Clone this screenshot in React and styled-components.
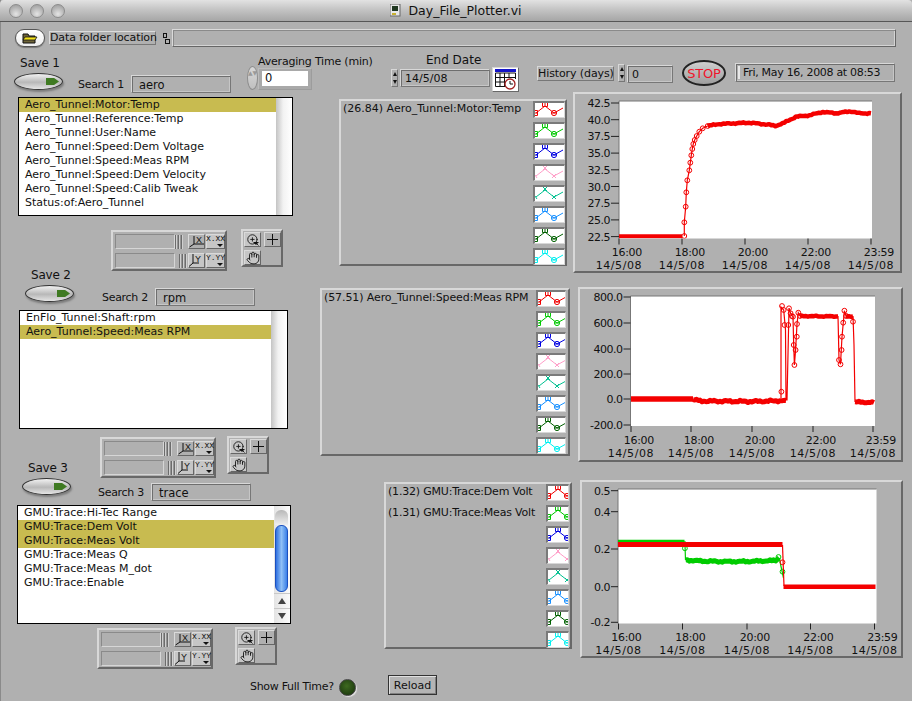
import React from 'react';
import styled, { createGlobalStyle, css } from 'styled-components';
import { Hand, ZoomIn } from 'lucide-react';

const GlobalStyle = createGlobalStyle`
  html, body {
    margin: 0;
    background: #b0b0b0;
    overflow: hidden;
  }
  * { box-sizing: border-box; }
`;

const raised = css`
  border: 2px solid;
  border-color: #d8d8d8 #686868 #686868 #d8d8d8;
`;

const Window = styled.div`
  width: 912px;
  height: 701px;
  background: #b0b0b0;
  color: #111;
  font-family: "DejaVu Sans", sans-serif;
  font-size: 11px;
  overflow: hidden;
  box-shadow: inset 1px 0 0 #8a8a8a;
`;

// title bar
const TitleBar = styled.div`
  height: 22px;
  display: flex;
  align-items: center;
  justify-content: center;
  position: relative;
  background: linear-gradient(#e2e2e2, #c4c4c4 45%, #a6a6a6);
  border-bottom: 1px solid #565656;
  border-radius: 4px 4px 0 0;
`;

const Lights = styled.div`
  position: absolute;
  left: 9px;
  top: 4px;
  display: flex;
  gap: 7px;
`;

const Light = styled.span`
  width: 14px;
  height: 14px;
  border-radius: 50%;
  border: 1px solid #8c8c8c;
  background: radial-gradient(circle at 50% 75%, #e4e4e4, #b4b4b4 60%, #989898);
`;

const TitleText = styled.span`
  margin-left: 7px;
  font-size: 12.5px;
`;

// path row
const PathRow = styled.div`
  display: flex;
  align-items: center;
  height: 18px;
  margin: 7px 0 6px 15px;
`;

const FolderButton = styled.button`
  width: 30px;
  height: 18px;
  padding: 0;
  display: flex;
  align-items: center;
  justify-content: center;
  border: 1px solid #555;
  border-radius: 9px;
  background: linear-gradient(#fff, #eee);
  box-shadow: 0 1px 1px #777;
`;

const PlainLabel = styled.span`
  width: 107px;
  height: 14px;
  margin-left: 4px;
  line-height: 12px;
  letter-spacing: -0.1px;
  text-align: center;
  white-space: nowrap;
  border: 1px solid;
  border-color: #dcdcdc #777 #777 #dcdcdc;
`;

const PathIcon = styled.span`
  width: 9px;
  height: 16px;
  margin-left: 7px;
  display: flex;
  align-items: center;
`;

const PathField = styled.div`
  width: 724px;
  height: 18px;
  border: 1px solid;
  border-color: #dadada #666 #666 #dadada;
  box-shadow: inset 1px 1px 0 #8a8a8a, inset -1px -1px 0 #d4d4d4;
`;

// control row
const HeaderRow = styled.div`
  display: flex;
  align-items: flex-start;
  height: 39px;
  padding-left: 14px;
`;

const SaveGroup = styled.div`
  display: flex;
  align-items: flex-start;
  margin-left: ${(p) => p.$left || 0}px;
  margin-top: ${(p) => p.$offset || 0}px;
  height: ${(p) => p.$height}px;
`;

const SaveBlock = styled.div`
  width: 49px;
  flex: none;
`;

const SaveLabel = styled.div`
  height: 14px;
  line-height: 14px;
  margin-left: 6px;
  font-size: 12px;
  letter-spacing: -0.2px;
  white-space: nowrap;
`;

const Toggle = styled.div`
  position: relative;
  width: 49px;
  height: 17px;
  margin-top: 3px;
  border-radius: 50%;
  border: 1px solid #333;
  background: linear-gradient(#f2f2f2, #b8b8b8 55%, #e4e4e4);
  box-shadow: 1px 2px 2px #7c7c7c;
`;

const ToggleArrow = styled.span`
  position: absolute;
  left: 31px;
  top: 3px;
  width: 13px;
  height: 9px;
  background: #3f7a22;
  clip-path: polygon(0 12%, 62% 12%, 100% 50%, 62% 88%, 0 88%);
`;

const SearchBlock = styled.div`
  display: flex;
  align-items: center;
  margin-left: ${(p) => p.$gap}px;
  margin-top: ${(p) => p.$top}px;
`;

const SearchLabel = styled.span`
  width: 53px;
  letter-spacing: -0.3px;
  white-space: nowrap;
`;

const textField = css`
  border: 1px solid;
  border-color: #d8d8d8 #777 #777 #d8d8d8;
  box-shadow: inset 1px 1px 0 #6e6e6e, inset -1px -1px 0 #c6c6c6;
  white-space: nowrap;
`;

const SearchField = styled.div`
  ${textField}
  width: 100px;
  height: 18px;
  line-height: 19px;
  padding-left: 7px;
  font-size: 11.5px;
`;

const AveragingBlock = styled.div`
  width: 126px;
  margin-left: 16px;
  margin-top: 3px;
  height: 36px;
  flex: none;
`;

const AveragingLabel = styled.div`
  margin-top: -1px;
  margin-left: 11px;
  height: 14px;
  line-height: 14px;
  letter-spacing: -0.2px;
  white-space: nowrap;
`;

const AveragingControl = styled.div`
  display: flex;
  align-items: flex-start;
`;

const LensSpinner = styled.div`
  width: 11px;
  height: 24px;
  margin-top: -3px;
  border-radius: 50%;
  border: 1px solid #8e8e8e;
  background: linear-gradient(#d8d8d8, #c0c0c0);
  color: #999;
  font-size: 6px;
  line-height: 10px;
  text-align: center;
  padding-top: 1px;
`;

const NumericFrame = styled.div`
  width: 54px;
  height: 22px;
  margin-top: -1px;
  padding: 2px 3px;
  background: #a9a9a9;
  border: 1px solid;
  border-color: #bcbcbc #9c9c9c #9c9c9c #bcbcbc;
`;

const NumericWhite = styled.div`
  height: 15px;
  width: 46px;
  background: #fff;
  line-height: 15px;
  padding-left: 3px;
  font-size: 11.5px;
`;

const EndDateBlock = styled.div`
  width: 128px;
  margin-left: 18px;
  flex: none;
`;

const EndDateLabel = styled.div`
  height: 15px;
  line-height: 15px;
  margin-left: 35px;
  font-size: 12px;
  white-space: nowrap;
`;

const DateControl = styled.div`
  display: flex;
  align-items: flex-start;
  margin-top: 1px;
`;

const ArrowStack = styled.div`
  width: 7px;
  height: 18px;
  display: flex;
  flex-direction: column;
  border: 1px solid;
  border-color: #d8d8d8 #777 #777 #d8d8d8;
  flex: none;
`;

const Arrow = styled.span`
  flex: 1;
  display: flex;
  align-items: center;
  justify-content: center;
  &::after {
    content: '';
    border-left: 2.5px solid transparent;
    border-right: 2.5px solid transparent;
    ${(p) => (p.$down ? 'border-top: 4px solid #111;' : 'border-bottom: 4px solid #111;')}
  }
`;

const DateField = styled.div`
  ${textField}
  width: 90px;
  height: 18px;
  margin-left: 2px;
  line-height: 17px;
  padding-left: 4px;
`;

const CalendarButton = styled.div`
  width: 27px;
  height: 25px;
  margin-left: 2px;
  margin-top: -2px;
  background: #fff;
  ${raised}
  border-width: 1px;
  padding: 1px 2px;
`;

const HistoryBlock = styled.div`
  display: flex;
  align-items: flex-start;
  margin-left: 18px;
  margin-top: 11px;
  flex: none;
`;

const HistoryLabel = styled.span`
  width: 77px;
  height: 15px;
  margin-top: 2px;
  margin-right: 4px;
  line-height: 13px;
  letter-spacing: -0.1px;
  text-align: center;
  white-space: nowrap;
  border: 1px solid;
  border-color: #d8d8d8 #777 #777 #d8d8d8;
`;

const HistoryField = styled.div`
  ${textField}
  width: 46px;
  height: 18px;
  margin-left: 2px;
  margin-top: 1px;
  line-height: 17px;
  padding-left: 4px;
`;

const StopButton = styled.button`
  width: 44px;
  height: 26px;
  margin-left: 9px;
  margin-top: 7px;
  padding: 0;
  flex: none;
  border-radius: 50%;
  border: 2px solid #222;
  background: linear-gradient(#cfcfcf, #9e9e9e);
  color: #f0142a;
  font-family: "DejaVu Sans", sans-serif;
  font-size: 13px;
  letter-spacing: -0.2px;
`;

const ClockField = styled.div`
  ${textField}
  width: 160px;
  height: 19px;
  margin-left: 9px;
  margin-top: 10px;
  padding-left: 7px;
  line-height: 18px;
  letter-spacing: -0.3px;
  flex: none;
  position: relative;
  &::before {
    content: '';
    position: absolute;
    left: 2px;
    top: 2px;
    width: 2px;
    height: 13px;
    background: #e8e8e8;
  }
`;

// columns
const Columns = styled.div`
  display: flex;
  align-items: flex-start;
`;

const LeftColumn = styled.div`
  width: 310px;
  flex: none;
  padding-top: 5px;
`;

const ListBox = styled.div`
  display: flex;
  width: ${(p) => p.$width}px;
  height: 119px;
  margin-left: ${(p) => p.$left}px;
  background: #fff;
  border: 1px solid #000;
`;

const ListRows = styled.div`
  flex: 1;
  min-width: 0;
`;

const ListRow = styled.div`
  height: 14px;
  line-height: 14px;
  padding-left: 6px;
  white-space: nowrap;
  background: ${(p) => (p.$selected ? '#c8bb50' : 'transparent')};
`;

const ScrollGutter = styled.div`
  width: 16px;
  flex: none;
  background: linear-gradient(to right, #c4c4c4, #f2f2f2 45%, #fff);
`;

const AquaScroll = styled.div`
  width: 16px;
  flex: none;
  display: flex;
  flex-direction: column;
  background: linear-gradient(to right, #e4e4e4, #fbfbfb);
`;

const ScrollCap = styled.div`
  height: 15px;
  margin: 4px 2px 0 1px;
  border-radius: 6px 6px 0 0;
  background: linear-gradient(#b8b8b8, #efefef);
`;

const ScrollThumb = styled.div`
  height: 68px;
  margin: 0 2px 0 1px;
  border-radius: 6px;
  border: 1px solid #1a50c0;
  background: linear-gradient(to right, #2f70e0, #8fc0f6 50%, #3a80e8);
`;

const ScrollButton = styled.div`
  height: 15px;
  margin-top: ${(p) => p.$top || 0}px;
  display: flex;
  align-items: center;
  justify-content: center;
  border-top: 1px solid #c8c8c8;
  &::after {
    content: '';
    border-left: 4px solid transparent;
    border-right: 4px solid transparent;
    ${(p) => (p.$down ? 'border-top: 6px solid #444;' : 'border-bottom: 6px solid #444;')}
  }
`;

const PaletteRow = styled.div`
  display: flex;
  align-items: flex-start;
  gap: ${(p) => p.$gap}px;
  margin: ${(p) => p.$top}px 0 ${(p) => p.$bottom}px ${(p) => p.$left}px;
`;

const ScalePalette = styled.div`
  ${raised}
  width: 116px;
  height: 41px;
  margin-top: 1px;
  padding: 2px;
  display: flex;
  flex-direction: column;
  gap: 4px;
`;

const ScaleLine = styled.div`
  display: flex;
  align-items: center;
  height: 15px;
`;

const ScaleName = styled.div`
  width: 60px;
  height: 15px;
  flex: none;
  border: 1px solid;
  border-color: #8a8a8a #d6d6d6 #d6d6d6 #8a8a8a;
`;

const Grip = styled.div`
  width: 8px;
  height: 14px;
  margin-left: ${(p) => p.$offset}px;
  flex: none;
  background: repeating-linear-gradient(to right, #6c6c6c 0 1px, #d0d0d0 1px 2px, #969696 2px 3px);
`;

const PaletteButton = styled.div`
  width: ${(p) => p.$width || 17}px;
  height: 15px;
  margin-left: ${(p) => p.$gap || 0}px;
  flex: none;
  display: flex;
  align-items: center;
  justify-content: center;
  position: relative;
  border: 1px solid;
  border-color: #dadada #666 #666 #dadada;
  background: ${(p) => (p.$active ? '#c6c6c6' : 'transparent')};
`;

const FormatText = styled.span`
  font-family: "Liberation Mono", monospace;
  font-size: 8px;
  margin-top: -5px;
  line-height: 8px;
`;

const FormatCaret = styled.span`
  position: absolute;
  right: 1px;
  bottom: 1px;
  border-left: 3px solid transparent;
  border-right: 3px solid transparent;
  border-top: 3px solid #111;
`;

const ZoomPalette = styled.div`
  ${raised}
  width: 42px;
  height: 38px;
  padding: 1px;
  display: grid;
  grid-template-columns: 17px 17px;
  grid-template-rows: 15px 15px;
  column-gap: 3px;
  row-gap: 3px;
`;

const ZoomTool = styled(PaletteButton)`
  margin-left: 0;
  color: #111;
`;

const SaveRow = styled.div`
  margin-top: ${(p) => p.$top}px;
`;

const RightColumn = styled.div`
  flex: 1;
  min-width: 0;
`;

const ChartRow = styled.div`
  display: flex;
  align-items: flex-start;
  gap: ${(p) => p.$gap}px;
  margin: ${(p) => p.$top}px 0 0 ${(p) => p.$left}px;
`;

const Legend = styled.div`
  ${raised}
  width: ${(p) => p.$width}px;
  height: ${(p) => p.$height}px;
  margin-top: ${(p) => p.$top}px;
  padding: 0 ${(p) => p.$right}px 0 2px;
  display: flex;
  flex-direction: column;
`;

const LegendRow = styled.div`
  height: 21px;
  display: flex;
  align-items: flex-start;
  justify-content: space-between;
  flex: none;
`;

const LegendName = styled.span`
  line-height: 16px;
  letter-spacing: ${(p) => p.$spacing}px;
  white-space: nowrap;
`;

const Swatch = styled.div`
  width: ${(p) => p.$width}px;
  height: 17px;
  overflow: hidden;
  flex: none;
  background: #fff;
  border: 1px solid;
  border-width: 2px 1px 1px 2px;
  border-color: #7a7a7a #d8d8d8 #d8d8d8 #7a7a7a;
`;

const ChartFrame = styled.div`
  ${raised}
  width: ${(p) => p.$width}px;
  height: ${(p) => p.$height}px;
  flex: none;
`;

const ChartSvg = styled.svg`
  display: block;
  font-family: "DejaVu Sans", sans-serif;
  font-size: 11px;
`;

// footer
const Footer = styled.div`
  display: flex;
  align-items: center;
  height: 20px;
  margin-top: 6px;
  padding-left: 250px;
`;

const FullTimeLabel = styled.span`
  width: 89px;
  margin-top: 3px;
  letter-spacing: -0.3px;
  white-space: nowrap;
`;

const Led = styled.span`
  width: 17px;
  height: 17px;
  margin-top: 4px;
  border-radius: 50%;
  border: 1px solid #444;
  background: radial-gradient(circle at 45% 40%, #3e6a20, #1f3d10 75%);
  box-shadow: 1px 1px 1px #e8e8e8;
`;

const ReloadButton = styled.button`
  width: 49px;
  height: 20px;
  margin-left: 32px;
  padding: 0;
  font-family: "DejaVu Sans", sans-serif;
  font-size: 11px;
  color: #111;
  background: #b4b4b4;
  border: 1px solid #333;
  box-shadow: inset 1px 1px 0 #e0e0e0, inset -1px -1px 0 #808080;
`;

const swatchColors = [
  { color: '#f00000' },
  { color: '#00c800' },
  { color: '#0000e0' },
  { color: '#ff9ec8', cross: true },
  { color: '#00c090', cross: true },
  { color: '#1890ff' },
  { color: '#006000' },
  { color: '#00f0f0' },
];

function SwatchLine({ color, cross }) {
  return (
    <svg width="30" height="15" viewBox="0 0 30 15" fill="none" stroke={color} strokeWidth="1">
      <path d="M1 10 L10 3 L19 10 L28 5" />
      {cross ? (
        <path d="M8 0 L12 4 M12 0 L8 4 M17 8 L21 12 M21 8 L17 12 M0 9 L2 12" />
      ) : (
        <g>
          <path d="M7.5 0 V3.5 H12.5 V0 M10 0 V3" />
          <circle cx="19" cy="10" r="2.6" />
          <path d="M17 10 H21" />
          <path d="M0 7.5 H2.5 V12.5 H0 M0 10 H2.5" />
        </g>
      )}
    </svg>
  );
}

function ChartLegend({ names, width, height, top, right, spacing, swatchWidth }) {
  return (
    <Legend $width={width} $height={height} $top={top} $right={right}>
      {swatchColors.map((s, i) => (
        <LegendRow key={s.color}>
          <LegendName $spacing={spacing}>{names[i]}</LegendName>
          <Swatch $width={swatchWidth}>
            <SwatchLine color={s.color} cross={s.cross} />
          </Swatch>
        </LegendRow>
      ))}
    </Legend>
  );
}

function pts(list) {
  return list.map((p) => p.join(',')).join(' ');
}

// the real traces are noisy, so add a small fixed wobble along a band
function rough(list, amp) {
  const out = [];
  for (let i = 0; i < list.length - 1; i++) {
    const [x0, y0] = list[i];
    const [x1, y1] = list[i + 1];
    const steps = Math.max(1, Math.round((x1 - x0) / 2));
    for (let s = 0; s < steps; s++) {
      const x = x0 + ((x1 - x0) * s) / steps;
      const y = y0 + ((y1 - y0) * s) / steps;
      out.push([x, y + (Math.sin(x * 1.9) + Math.sin(x * 0.43)) * amp]);
    }
  }
  out.push(list[list.length - 1]);
  return out;
}

// coordinates below are window pixels, the viewBox takes care of the offset
function Chart({ box, plot, yTicks, xTicks, timeY, dateY, tickLen, series }) {
  const times = ['16:00', '18:00', '20:00', '22:00', '23:59'];
  const clipId = 'clip' + box.top;
  return (
    <ChartFrame $width={box.w} $height={box.h}>
      <ChartSvg
        width={box.w - 4}
        height={box.h - 4}
        viewBox={`${box.left + 2} ${box.top + 2} ${box.w - 4} ${box.h - 4}`}
      >
        <defs>
          <clipPath id={clipId}>
            <rect x={plot.x0} y={plot.y0} width={plot.x1 - plot.x0} height={plot.y1 - plot.y0} />
          </clipPath>
        </defs>
        <rect x={plot.x0} y={plot.y0} width={plot.x1 - plot.x0} height={plot.y1 - plot.y0} fill="#fff" />
        <path d={`M${plot.x0} ${plot.y1} V${plot.y0} H${plot.x1}`} fill="none" stroke="#777" />
        {yTicks.map((t) => (
          <g key={t.label}>
            <path d={`M${plot.x0 - tickLen} ${t.y} H${plot.x0}`} stroke="#222" />
            <text x={plot.x0 - tickLen - 1} y={t.y + 4} textAnchor="end" fill="#111" letterSpacing="-0.5">
              {t.label}
            </text>
          </g>
        ))}
        {xTicks.map((x, i) => (
          <g key={times[i]}>
            <path d={`M${x} ${plot.y1} v6`} stroke="#222" />
            <text x={x + 23} y={timeY} textAnchor="end" fill="#111" letterSpacing="-0.3">
              {times[i]}
            </text>
            <text x={x + 23} y={dateY} textAnchor="end" fill="#111" letterSpacing="0.55">
              14/5/08
            </text>
          </g>
        ))}
        <g clipPath={`url(#${clipId})`} fill="none">
          {series.map((s, i) => (
            <g key={i} stroke={s.color}>
              {(s.lines || []).map((l, j) => (
                <polyline key={j} points={pts(l)} strokeWidth="1.2" />
              ))}
              {(s.bands || []).map((b, j) => (
                <polyline key={j} points={pts(b.p)} strokeWidth={b.w} strokeLinejoin="round" />
              ))}
              {(s.marks || []).map((m, j) => (
                <circle key={j} cx={m[0]} cy={m[1]} r="2.4" strokeWidth="1" />
              ))}
            </g>
          ))}
        </g>
      </ChartSvg>
    </ChartFrame>
  );
}

const RED = '#f40000';
const GREEN = '#00cc00';

const rise = [
  [684.3, 236], [684.3, 222.3], [685.7, 206.7], [686.3, 192.3], [687.3, 180.3], [689.3, 170.3],
  [690.3, 162.7], [691.3, 155.3], [692.3, 149], [693.3, 144], [694.7, 140], [696.7, 136],
  [699.3, 131.7], [702.7, 128.3], [707.7, 126],
];

const chart1 = {
  box: { left: 573, top: 92, w: 329, h: 181 },
  plot: { x0: 619, x1: 872, y0: 101, y1: 238.5 },
  tickLen: 8,
  timeY: 256,
  dateY: 269,
  xTicks: [619, 682, 745, 808, 871],
  yTicks: [
    ['42.5', 103], ['40.0', 119.7], ['37.5', 136.4], ['35.0', 153.1], ['32.5', 169.8],
    ['30.0', 186.5], ['27.5', 203.2], ['25.0', 219.9], ['22.5', 236.6],
  ].map(([label, y]) => ({ label, y })),
  series: [
    {
      color: RED,
      lines: [rise],
      marks: rise,
      bands: [
        { w: 4, p: [[619, 236.3], [682, 236.3]] },
        {
          w: 4.5,
          p: rough([
            [707.7, 126], [719.3, 124], [749.3, 122.7], [769.3, 124.7], [775.3, 126], [784.3, 122.7],
            [796, 116.7], [809.3, 115.3], [822.7, 112], [836, 113.3], [851, 111.3], [859.3, 113.3], [871, 113.3],
          ], 0.35),
        },
      ],
    },
  ],
};

const spikeA = [
  [781.4, 391.7], [782, 306], [783.7, 310], [784.5, 325], [789, 308.3], [790.6, 313.3], [788.3, 325],
  [791.7, 316], [793, 316.7], [793.7, 345], [794.4, 365], [795.6, 350], [796.8, 336.7], [797, 324],
  [798.3, 312.7], [800, 316],
];
const spikeB = [
  [839, 360], [840.5, 364.3], [841.6, 350], [842, 336.7], [843.2, 322.7], [844.4, 310.7], [846, 316],
  [853, 321.7],
];

const chart2 = {
  box: { left: 578, top: 287, w: 325, h: 175 },
  plot: { x0: 630.5, x1: 875, y0: 296, y1: 426 },
  tickLen: 7,
  timeY: 444,
  dateY: 457,
  xTicks: [631, 691, 752, 813, 873],
  yTicks: [
    ['800.0', 297], ['600.0', 323], ['400.0', 349], ['200.0', 374], ['0.0', 399], ['-200.0', 425],
  ].map(([label, y]) => ({ label, y })),
  series: [
    {
      color: RED,
      lines: [
        [[781, 398], [781, 307], [783.7, 310], [785.5, 330], [786, 400], [787, 400], [789, 308.3]],
        [[789, 308.3], [790.6, 313.3], [793, 317], [793.7, 345], [794.4, 365], [795.6, 350], [797, 324], [798.3, 312.7], [800, 316]],
        [[838, 316], [839, 360], [840.5, 364.3], [842, 336.7], [844.4, 310.7], [846, 316]],
        [[853, 316], [854, 345], [855, 402]],
      ],
      marks: [...spikeA, ...spikeB],
      bands: [
        { w: 5.5, p: [[631, 399], [693, 399]] },
        { w: 5, p: rough([[693, 399.5], [700, 401], [752, 401.5], [770, 401], [786, 400.5]], 0.6) },
        { w: 4.5, p: rough([[800, 316], [838, 316.5]], 0.3) },
        { w: 4.5, p: rough([[846, 316], [853, 316.5]], 0.3) },
        { w: 5, p: rough([[855, 402], [874, 402.5]], 0.4) },
      ],
    },
  ],
};

const chart3 = {
  box: { left: 579.5, top: 480, w: 323, h: 178 },
  plot: { x0: 617.5, x1: 876, y0: 489, y1: 623.5 },
  tickLen: 7,
  timeY: 641,
  dateY: 654,
  xTicks: [618, 682, 746.5, 810, 874],
  yTicks: [
    ['0.5', 490.7], ['0.4', 511.7], ['0.2', 549], ['0.0', 586.7], ['-0.2', 622.3],
  ].map(([label, y]) => ({ label, y })),
  series: [
    {
      color: GREEN,
      lines: [[[684.4, 541], [685, 560]], [[778.7, 558], [783, 578]]],
      marks: [[684.4, 548.3], [782, 571.7], [778, 557]],
      bands: [
        { w: 3, p: [[617.5, 541.3], [684, 541.3]] },
        {
          w: 5,
          p: rough([[685, 560], [700, 561], [720, 561.5], [745, 561.5], [760, 561], [775, 560.5], [778.7, 558]], 0.5),
        },
      ],
    },
    {
      color: RED,
      lines: [[[782, 545], [783.5, 586]]],
      marks: [[782, 562.3]],
      bands: [
        { w: 5, p: [[617.5, 544.6], [782, 544.6]] },
        { w: 4.5, p: [[783, 586.7], [875, 586.7]] },
      ],
    },
  ],
};

function FolderIcon() {
  return (
    <svg width="16" height="11" viewBox="0 0 16 11">
      <path d="M1 1 H6 L7 3 H13 V10 H1 Z" fill="#6e6438" stroke="#111" />
      <path d="M1 7 L3 4 H15 L13 7 Z" fill="#f4e21a" stroke="#111" strokeWidth="0.8" />
    </svg>
  );
}

function CalendarIcon() {
  return (
    <svg width="21" height="21" viewBox="0 0 21 21" fill="none">
      <rect x="0" y="0" width="21" height="3" fill="#1414c8" />
      <path d="M0.5 4 V17.5 H15 M0.5 4 H20.5 V10 M5 4 V17 M9.5 4 V17 M14 4 V9 M0 8.5 H20 M0 13 H11" stroke="#111" />
      <circle cx="15" cy="15" r="5" fill="#fff" stroke="#a02020" strokeWidth="1.3" />
      <path d="M15 12 V15 H18" stroke="#111" />
    </svg>
  );
}

function AxisIcon({ letter }) {
  const isX = letter === 'X';
  return (
    <svg width="15" height="13" viewBox="0 0 15 13" fill="none">
      <path d={isX ? 'M0.5 12 L5 9 V1 M5 9 H15' : 'M0 12.5 L4 9 V0 M4 9 H10'} stroke="#111" />
      <text x={isX ? 7 : 6} y="7.5" fontFamily="Liberation Sans, sans-serif" fontSize="9" fill="#111">
        {letter}
      </text>
    </svg>
  );
}

function GraphPalette({ top, bottom, left, gap }) {
  return (
    <PaletteRow $top={top} $bottom={bottom} $left={left} $gap={gap}>
      <ScalePalette>
        <ScaleLine>
          <ScaleName />
          <Grip $offset={0} />
          <PaletteButton $gap={5}>
            <AxisIcon letter="X" />
          </PaletteButton>
          <PaletteButton $width={19} $gap={1} $active>
            <FormatText>X.XX</FormatText>
            <FormatCaret />
          </PaletteButton>
        </ScaleLine>
        <ScaleLine>
          <ScaleName />
          <Grip $offset={4} />
          <PaletteButton $gap={1} $active>
            <AxisIcon letter="Y" />
          </PaletteButton>
          <PaletteButton $width={19} $gap={1} $active>
            <FormatText>Y.YY</FormatText>
            <FormatCaret />
          </PaletteButton>
        </ScaleLine>
      </ScalePalette>
      <ZoomPalette>
        <ZoomTool $active>
          <ZoomIn size={14} strokeWidth={1.5} />
          <FormatCaret />
        </ZoomTool>
        <ZoomTool>
          <svg width="13" height="13" viewBox="0 0 13 13" stroke="#111" shapeRendering="crispEdges">
            <path d="M6.5 1 V12 M1 6.5 H12" />
          </svg>
        </ZoomTool>
        <ZoomTool $active>
          <Hand size={14} strokeWidth={1.5} />
        </ZoomTool>
      </ZoomPalette>
    </PaletteRow>
  );
}

function SaveHeader({ n, text, left, offset, gap, top, height }) {
  return (
    <SaveGroup $left={left} $offset={offset} $height={height}>
      <SaveBlock>
        <SaveLabel>Save {n}</SaveLabel>
        <Toggle>
          <ToggleArrow />
        </Toggle>
      </SaveBlock>
      <SearchBlock $gap={gap} $top={top}>
        <SearchLabel>Search {n}</SearchLabel>
        <SearchField>{text}</SearchField>
      </SearchBlock>
    </SaveGroup>
  );
}

function SignalList({ rows, selected, left, width, aqua }) {
  return (
    <ListBox $left={left} $width={width}>
      <ListRows>
        {rows.map((r) => (
          <ListRow key={r} $selected={selected.includes(r)}>
            {r}
          </ListRow>
        ))}
      </ListRows>
      {aqua ? (
        <AquaScroll>
          <ScrollCap />
          <ScrollThumb />
          <ScrollButton $top={1} />
          <ScrollButton $down />
        </AquaScroll>
      ) : (
        <ScrollGutter />
      )}
    </ListBox>
  );
}

const list1 = [
  'Aero_Tunnel:Motor:Temp',
  'Aero_Tunnel:Reference:Temp',
  'Aero_Tunnel:User:Name',
  'Aero_Tunnel:Speed:Dem Voltage',
  'Aero_Tunnel:Speed:Meas RPM',
  'Aero_Tunnel:Speed:Dem Velocity',
  'Aero_Tunnel:Speed:Calib Tweak',
  'Status:of:Aero_Tunnel',
];
const list2 = ['EnFlo_Tunnel:Shaft:rpm', 'Aero_Tunnel:Speed:Meas RPM'];
const list3 = [
  'GMU:Trace:Hi-Tec Range',
  'GMU:Trace:Dem Volt',
  'GMU:Trace:Meas Volt',
  'GMU:Trace:Meas Q',
  'GMU:Trace:Meas M_dot',
  'GMU:Trace:Enable',
];

export default function App() {
  return (
    <Window>
      <GlobalStyle />
      <TitleBar>
        <Lights>
          <Light />
          <Light />
          <Light />
        </Lights>
        <svg width="11" height="13" viewBox="0 0 11 13">
          <rect x="0" y="0" width="10" height="12" fill="#e8e8e8" stroke="#666" />
          <rect x="2" y="2" width="6" height="5" fill="#203820" />
          <rect x="2" y="9" width="4" height="2" fill="#c8b030" />
        </svg>
        <TitleText>Day_File_Plotter.vi</TitleText>
      </TitleBar>

      <PathRow>
        <FolderButton>
          <FolderIcon />
        </FolderButton>
        <PlainLabel>Data folder location</PlainLabel>
        <PathIcon>
          <svg width="7" height="13" viewBox="0 0 7 13" fill="none" stroke="#111">
            <rect x="0.5" y="1.5" width="3" height="4" />
            <rect x="2.5" y="7.5" width="4" height="4" />
          </svg>
        </PathIcon>
        <PathField />
      </PathRow>

      <HeaderRow>
        <SaveHeader n={1} text="aero" offset={3} gap={15} top={19} height={36} />
        <AveragingBlock>
          <AveragingLabel>Averaging Time (min)</AveragingLabel>
          <AveragingControl>
            <LensSpinner>▲▼</LensSpinner>
            <NumericFrame>
              <NumericWhite>0</NumericWhite>
            </NumericFrame>
          </AveragingControl>
        </AveragingBlock>
        <EndDateBlock>
          <EndDateLabel>End Date</EndDateLabel>
          <DateControl>
            <ArrowStack>
              <Arrow />
              <Arrow $down />
            </ArrowStack>
            <DateField>14/5/08</DateField>
            <CalendarButton>
              <CalendarIcon />
            </CalendarButton>
          </DateControl>
        </EndDateBlock>
        <HistoryBlock>
          <HistoryLabel>History (days)</HistoryLabel>
          <ArrowStack>
            <Arrow />
            <Arrow $down />
          </ArrowStack>
          <HistoryField>0</HistoryField>
        </HistoryBlock>
        <StopButton>STOP</StopButton>
        <ClockField>Fri, May 16, 2008 at 08:53</ClockField>
      </HeaderRow>

      <Columns>
        <LeftColumn>
          <SignalList rows={list1} selected={[list1[0]]} left={18} width={275} />
          <GraphPalette top={13} bottom={0} left={111} gap={14} />
          <SaveRow $top={-3}>
            <SaveHeader n={2} text="rpm" left={25} gap={28} top={20} height={42} />
          </SaveRow>
          <SignalList rows={list2} selected={[list2[1]]} left={19} width={269} />
          <GraphPalette top={7} bottom={-17} left={100} gap={11} />
          <SaveRow $top={0}>
            <SaveHeader n={3} text="trace" left={22} gap={27} top={22} height={44} />
          </SaveRow>
          <SignalList rows={list3} selected={[list3[1], list3[2]]} left={17} width={274} aqua />
          <GraphPalette top={3} bottom={0} left={97} gap={22} />
        </LeftColumn>

        <RightColumn>
          <ChartRow $top={0} $left={29} $gap={6}>
            <ChartLegend
              names={['(26.84) Aero_Tunnel:Motor:Temp']}
              width={228}
              height={167}
              top={7}
              right={0}
              spacing={0}
              swatchWidth={32}
            />
            <Chart {...chart1} />
          </ChartRow>
          <ChartRow $top={14} $left={10} $gap={8}>
            <ChartLegend
              names={['(57.51) Aero_Tunnel:Speed:Meas RPM']}
              width={250}
              height={168}
              top={1}
              right={2}
              spacing={-0.1}
              swatchWidth={30}
            />
            <Chart {...chart2} />
          </ChartRow>
          <ChartRow $top={18} $left={74} $gap={7.5}>
            <ChartLegend
              names={['(1.32) GMU:Trace:Dem Volt', '(1.31) GMU:Trace:Meas Volt']}
              width={188}
              height={167}
              top={2}
              right={1}
              spacing={-0.2}
              swatchWidth={23}
            />
            <Chart {...chart3} />
          </ChartRow>
        </RightColumn>
      </Columns>

      <Footer>
        <FullTimeLabel>Show Full Time?</FullTimeLabel>
        <Led />
        <ReloadButton>Reload</ReloadButton>
      </Footer>
    </Window>
  );
}
